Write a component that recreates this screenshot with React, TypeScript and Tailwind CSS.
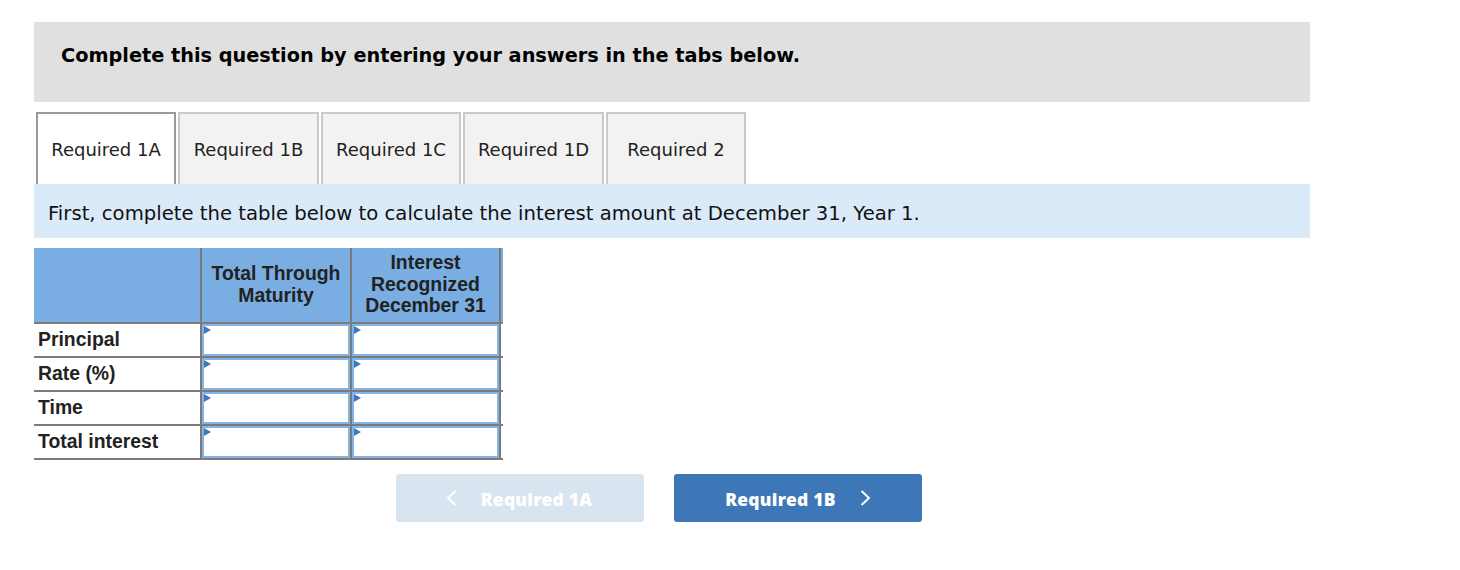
import React from "react";

const tabs = [
  { label: "Required 1A", w: "w-[140px]", active: true },
  { label: "Required 1B", w: "w-[141px]", active: false },
  { label: "Required 1C", w: "w-[140px]", active: false },
  { label: "Required 1D", w: "w-[141px]", active: false },
  { label: "Required 2", w: "w-[140px]", active: false },
];

const rows = ["Principal", "Rate (%)", "Time", "Total interest"];

function InputCell({ last }: { last?: boolean }) {
  return (
    <div
      className={`h-full border-l-2 border-[#7b7b7b] ${
        last ? "w-[151px] border-r-2" : "w-[150px]"
      }`}
    >
      <div className="relative h-full border-2 border-[#85b3e3] bg-white">
        <span className="absolute left-0 top-0 h-0 w-0 border-y-[4px] border-l-[7px] border-y-transparent border-l-[#3c78be]" />
      </div>
    </div>
  );
}

export default function App() {
  return (
    <div className="min-h-[570px] bg-white pt-[22px] pl-[34px] font-['DejaVu_Sans',Verdana,sans-serif]">
      <div className="w-[1276px]">
        {/* Instruction header */}
        <div className="flex h-[80px] items-start bg-[#e0e0e0] pl-[27px] pt-[20px]">
          <h1 className="text-[19.3px] font-bold text-black">
            Complete this question by entering your answers in the tabs below.
          </h1>
        </div>

        {/* Tabs */}
        <div className="mt-[10px] flex gap-[2px] pl-[2px]">
          {tabs.map((t) => (
            <div
              key={t.label}
              className={`flex h-[72px] items-center justify-center border-2 border-b-0 text-[18px] text-[#222] ${t.w} ${
                t.active
                  ? "border-[#9a9a9a] bg-white"
                  : "border-[#c9c9c9] bg-[#f2f2f2]"
              }`}
            >
              {t.label}
            </div>
          ))}
        </div>

        {/* Prompt */}
        <div className="flex h-[54px] items-center bg-[#dbeaf8] pl-[14px] pt-[5px] text-[19.65px] text-[#111]">
          First, complete the table below to calculate the interest amount at
          December 31, Year 1.
        </div>

        {/* Table */}
        <div className="mt-[10px] w-[469px] font-['Liberation_Sans',Arial,sans-serif] text-[19.4px] font-bold text-[#222]">
          <div className="flex h-[76px] border-b-2 border-[#7b7b7b] bg-[#7aaee2]">
            <div className="w-[166px]" />
            <div className="flex w-[150px] items-center justify-center border-l-2 border-[#7b7b7b] pb-[2px] text-center leading-[22px]">
              Total Through
              <br />
              Maturity
            </div>
            <div className="flex w-[151px] items-center justify-center border-x-2 border-[#7b7b7b] pb-[1px] text-center leading-[21.5px]">
              Interest
              <br />
              Recognized
              <br />
              December 31
            </div>
          </div>
          {rows.map((r) => (
            <div key={r} className="flex h-[34px] border-b-2 border-[#7b7b7b]">
              <div className="flex w-[166px] items-center pl-[4px]">{r}</div>
              <InputCell />
              <InputCell last />
            </div>
          ))}
        </div>

        {/* Navigation */}
        <div className="mt-[14px] flex gap-[30px] pl-[362px] font-['Open_Sans',sans-serif] text-[17.5px] font-extrabold tracking-[0.2px] text-white">
          <button className="flex h-[48px] w-[248px] items-center justify-center gap-[24px] rounded-[3px] bg-[#d9e4f1] pt-[3px] pr-[2px]">
            <svg width="11" height="16" viewBox="0 0 11 16" fill="none" className="-mt-[3px]">
              <path d="M9.5 1 2 8l7.5 7" stroke="white" strokeWidth="2" />
            </svg>
            <span>Required 1A</span>
          </button>
          <button className="flex h-[48px] w-[248px] items-center justify-center gap-[24px] rounded-[3px] bg-[#3d77b8] pt-[3px]">
            <span>Required 1B</span>
            <svg width="11" height="16" viewBox="0 0 11 16" fill="none" className="-mt-[3px]">
              <path d="M1.5 1 9 8l-7.5 7" stroke="white" strokeWidth="2" />
            </svg>
          </button>
        </div>
      </div>
    </div>
  );
}
